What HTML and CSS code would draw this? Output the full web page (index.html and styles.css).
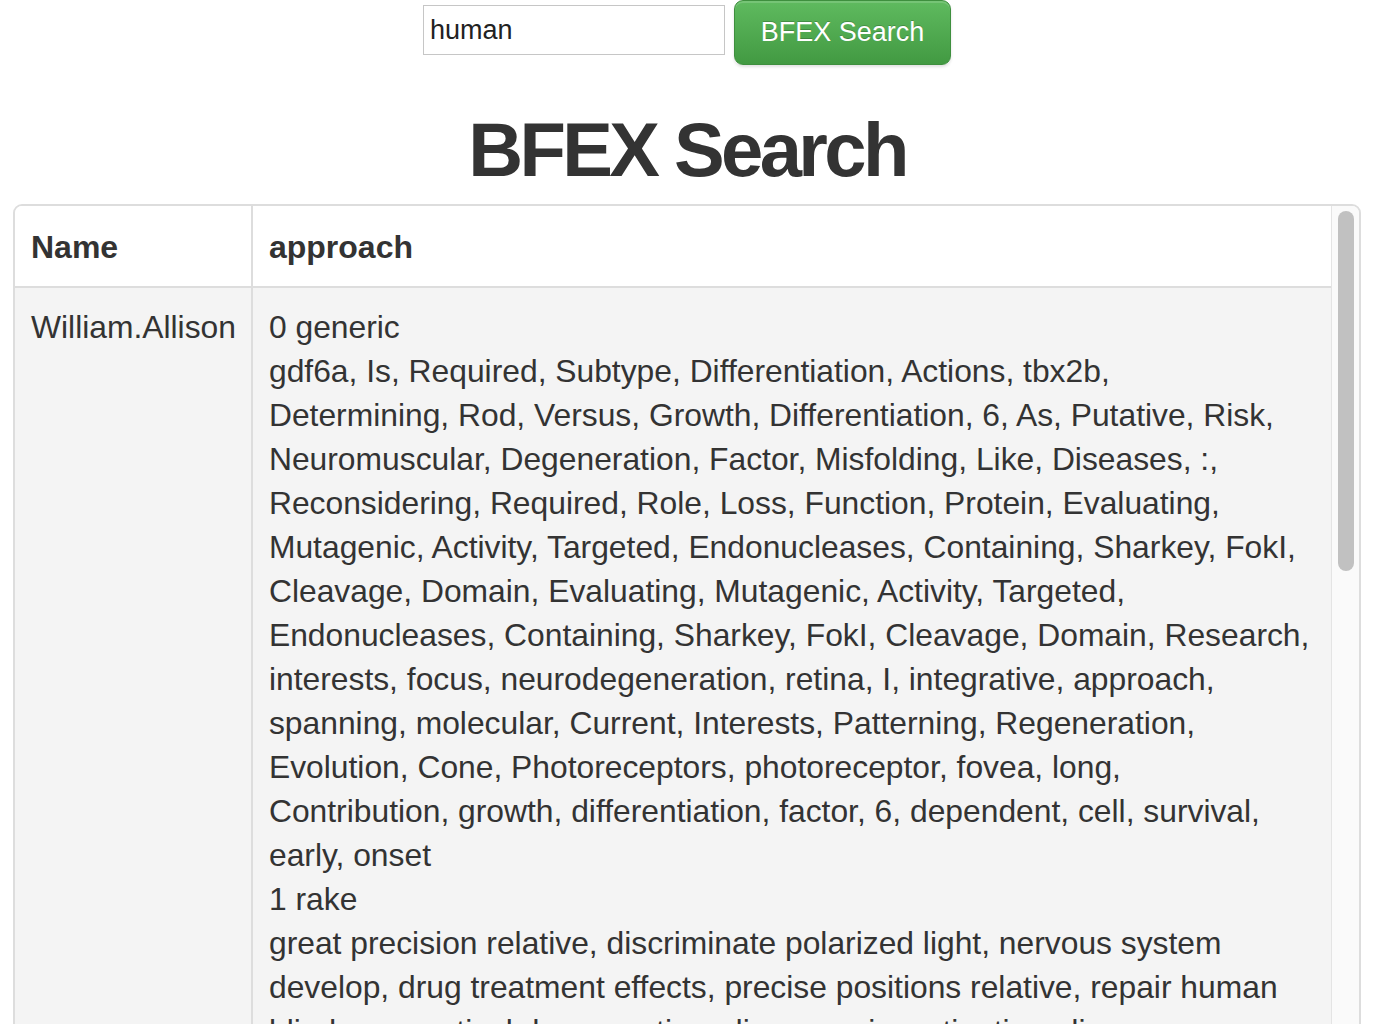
FILE: index.html
```html
<!DOCTYPE html>
<html lang="en">
<head>
<meta charset="utf-8">
<title>BFEX Search</title>
<link rel="stylesheet" href="styles.css">
</head>
<body>
  <form class="search-bar">
    <input class="search-input" type="text" value="human">
    <button class="search-btn" type="button">BFEX Search</button>
  </form>

  <h1 class="title">BFEX Search</h1>

  <div class="results-panel">
    <div class="results-scroll">
      <table class="results">
        <thead>
          <tr>
            <th class="col-name">Name</th>
            <th class="col-approach">approach</th>
          </tr>
        </thead>
        <tbody>
          <tr>
            <td class="col-name">William.Allison</td>
            <td class="col-approach">
              <div class="topic">0 generic</div>
              <div class="keywords">gdf6a, Is, Required, Subtype, Differentiation, Actions, tbx2b,<br>Determining, Rod, Versus, Growth, Differentiation, 6, As, Putative, Risk,<br>Neuromuscular, Degeneration, Factor, Misfolding, Like, Diseases, :,<br>Reconsidering, Required, Role, Loss, Function, Protein, Evaluating,<br>Mutagenic, Activity, Targeted, Endonucleases, Containing, Sharkey, FokI,<br>Cleavage, Domain, Evaluating, Mutagenic, Activity, Targeted,<br>Endonucleases, Containing, Sharkey, FokI, Cleavage, Domain, Research,<br>interests, focus, neurodegeneration, retina, I, integrative, approach,<br>spanning, molecular, Current, Interests, Patterning, Regeneration,<br>Evolution, Cone, Photoreceptors, photoreceptor, fovea, long,<br>Contribution, growth, differentiation, factor, 6, dependent, cell, survival,<br>early, onset</div>
              <div class="topic">1 rake</div>
              <div class="keywords">great precision relative, discriminate polarized light, nervous system<br>develop, drug treatment effects, precise positions relative, repair human<br>blindness, optical degeneration, diseases, investigative, disease</div>
            </td>
          </tr>
        </tbody>
      </table>
    </div>
    <div class="scrollbar"><div class="scrollbar-thumb"></div></div>
  </div>
</body>
</html>
```

FILE: styles.css
```css
html, body {
  height: 1024px;
  overflow: hidden;
}

body {
  margin: 0;
  padding: 0 27px 0 13px;
  font-family: "Liberation Sans", Arial, Helvetica, sans-serif;
  color: #333333;
  background: #ffffff;
}

.search-bar {
  display: flex;
  justify-content: center;
  align-items: flex-start;
  gap: 9px;
  margin: 0;
}

.search-input {
  box-sizing: border-box;
  width: 302px;
  height: 50px;
  margin-top: 5px;
  padding: 0 6px;
  border: 1px solid #c6c6c6;
  border-radius: 0;
  font-family: "Liberation Sans", Arial, sans-serif;
  font-size: 27px;
  color: #222;
  background: #fff;
  outline: none;
}

.search-btn {
  box-sizing: border-box;
  width: 217px;
  height: 65px;
  padding: 0;
  border: 1px solid #3e8f3e;
  border-radius: 9px;
  background: linear-gradient(to bottom, #5fba5f 0%, #429a42 100%);
  box-shadow: inset 0 2px 0 rgba(255, 255, 255, 0.15), 0 2px 3px rgba(0, 0, 0, 0.12);
  color: #ffffff;
  font-family: "Liberation Sans", Arial, sans-serif;
  font-size: 27px;
  text-shadow: 0 -1px 0 rgba(0, 0, 0, 0.2);
  cursor: pointer;
}

.title {
  margin: 43px 0 12px;
  text-align: center;
  font-size: 76px;
  line-height: 1.1;
  font-weight: 700;
  letter-spacing: -3.6px;
  color: #333333;
}

.results-panel {
  display: flex;
  height: 900px;
  border: 2px solid #dddddd;
  border-radius: 9px;
  overflow: hidden;
}

.results-scroll {
  flex: 1;
  overflow: hidden;
}

.results {
  width: 100%;
  border-collapse: collapse;
  font-size: 31.8px;
  line-height: 44px;
}

.results th,
.results td {
  padding: 17px 17px 17px 16px;
  text-align: left;
  vertical-align: top;
}

.results th {
  background: #ffffff;
  font-size: 32px;
  font-weight: 700;
  padding-top: 19px;
  padding-bottom: 17px;
  border-bottom: 2px solid #dddddd;
}

.results td {
  background: #f4f4f4;
  padding-top: 17px;
}

.results .col-name {
  width: 1%;
  white-space: nowrap;
  padding-right: 15px;
}

.results .col-approach {
  border-left: 2px solid #dddddd;
  padding-left: 16px;
}

.keywords {
  white-space: nowrap;
}

.scrollbar {
  width: 28px;
  flex: none;
  background: #fafafa;
  border-left: 1px solid #e4e4e4;
  display: flex;
  justify-content: center;
  padding-top: 5px;
  box-sizing: border-box;
}

.scrollbar-thumb {
  width: 16px;
  height: 360px;
  border-radius: 8px;
  background: #c1c1c1;
}
```
